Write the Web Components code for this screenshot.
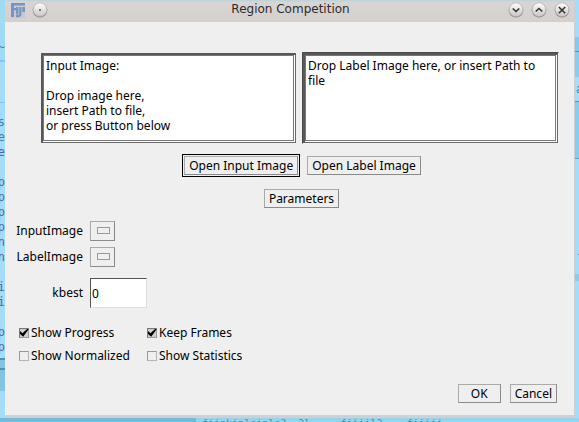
<!DOCTYPE html>
<html lang="en">
<head>
<meta charset="utf-8">
<title>Region Competition</title>
<style>
html, body { margin: 0; height: 100%; }
body { font: 12px/15px "Noto Sans", "Open Sans", sans-serif; color: #000; overflow: hidden; }
</style>
</head>
<body>
<desk-top>
  <code-strip slot="left" side="left"></code-strip>
  <dialog-window heading="Region Competition">
    <drop-row>
      <drop-area label="Input image" value="Input Image:&#10;&#10;Drop image here,&#10;insert Path to file,&#10;or press Button below"></drop-area>
      <drop-area label="Label image" deep value="Drop Label Image here, or insert Path to file"></drop-area>
    </drop-row>
    <button-row class="open">
      <push-button default>Open Input Image</push-button>
      <push-button>Open Label Image</push-button>
    </button-row>
    <button-row>
      <push-button>Parameters</push-button>
    </button-row>
    <field-list></field-list>
    <check-grid>
      <check-item checked>Show Progress</check-item>
      <check-item checked>Keep Frames</check-item>
      <check-item>Show Normalized</check-item>
      <check-item>Show Statistics</check-item>
    </check-grid>
    <button-row slot="actions" end>
      <push-button wide>OK</push-button>
      <push-button>Cancel</push-button>
    </button-row>
  </dialog-window>
  <code-strip slot="right" side="right"></code-strip>
  <code-strip slot="bottom" side="bottom"></code-strip>
</desk-top>
<script>
function define(name, render) {
  customElements.define(name, class extends HTMLElement {
    constructor() { super(); this.attachShadow({ mode: 'open' }); }
    connectedCallback() { this.shadowRoot.innerHTML = render(this); }
  });
}

define('desk-top', () => `
<style>
  :host { display: grid; grid-template: minmax(0, 1fr) 4px / 5px minmax(0, 1fr) 4px; height: 100%; background: #9ddaf9; }
  slot[name=bottom]::slotted(*) { grid-column: 1 / -1; }
</style>
<slot name="left"></slot><slot></slot><slot name="right"></slot><slot name="bottom"></slot>`);

// Slivers of the editor window that show around the dialog.
define('code-strip', el => {
  const side = el.getAttribute('side');
  const text = {
    left: '\n\n\n~\n\n\n\n\ns\ne\n<b>e\n\np\np\np\np\nn\nn\n\ni\ni\n\np\np</b>',
    right: '\n\n\n\n\n\na\n\n\n\n\n\n\n\n\n\n\n-\n\n',
    bottom: 'fiinkinleinle?  2l     fiiiil2    fiiiii'
  }[side];
  return `
<style>
  :host { display: block; overflow: hidden; }
  pre { margin: 0; font: 12px/15px "DejaVu Sans Mono", monospace; color: #3f83ad; }
  b { font-weight: normal; color: #5563a8; }
  .left { box-sizing: border-box; height: 100%; padding-top: 10px; direction: rtl;
    background: linear-gradient(#9fdcf4 0 60px, #85c6ec 60px 62px, #a3ddfb 62px 102px, #83c5ec 102px 103px, #a3ddfb 103px 358px, #4b94bb 358px 360px, #85c3e2 360px 368px, #4b94bb 368px 370px, #83c3e4 370px 391px, #a3ddfb 391px); }
  .right { box-sizing: border-box; height: 100%; padding: 7px 0 0 1px;
    background: linear-gradient(#a3ddfb 0 37px, #84c9ef 37px 51px, #4c95be 51px 52px, #8accf0 52px 77px, #a3ddfb 77px 101px, #4c95be 101px 102px, #8accf0 102px 158px, #5fa5cb 158px 159px, #a3ddfb 159px 274px, #8fcbe9 274px 281px, #a3ddfb 281px); }
  .bottom { padding-left: 202px; font-size: 10px; line-height: 12px; color: #4d8fb3;
    background: linear-gradient(90deg, #72bade 0 196px, #97d3f0 196px); }
</style>
<pre class="${side}" aria-hidden="true">${text}</pre>`;
});

define('title-button', el => `
<style>
  :host { display: block; }
  button { display: block; width: 16px; height: 16px; padding: 0; border: 0; background: none; }
  svg { display: block; }
</style>
<button type="button" aria-label="${el.getAttribute('label')}">
<svg width="16" height="16" viewBox="0 0 16 16">
  <defs><linearGradient id="g" x1="0" y1="0" x2="0" y2="1"><stop offset="0" stop-color="#fff"/><stop offset="1" stop-color="#c9c5c3"/></linearGradient></defs>
  <circle cx="8" cy="8.3" r="7.2" fill="#8a8683"/>
  <circle cx="8" cy="7.7" r="6.9" fill="url(#g)" stroke="#b0aca9" stroke-width=".7"/>
  <path d="${el.getAttribute('path')}" fill="none" stroke="#333" stroke-width="1.6"/>
</svg></button>`);

define('dialog-window', el => `
<style>
  :host { display: flex; flex-direction: column; box-sizing: border-box; background: #efefef; border-bottom: 3px solid #cfd0cf; border-right: 1px solid #d3cecd; border-top-left-radius: 4px; overflow: hidden; }
  header { display: grid; grid-template-columns: 1fr auto 1fr; height: 22px; padding: 0 4px 0 6px; background: linear-gradient(#bed4dc 0 1px, #d9d5d3 2px, #d5d0ce); }
  h1 { margin: 0; padding-top: 2px; font: 12px/15px "DejaVu Sans", sans-serif; color: #2b2b2b; }
  .side { display: flex; gap: 7px; padding-top: 2px; align-items: flex-start; }
  .right { justify-content: flex-end; }
  .logo { margin-top: 1px; }
  main { flex: 1; padding: 30px 15px 0 11px; }
  footer { padding: 0 17px 12px; }
</style>
<header>
  <div class="side">
    <svg class="logo" width="14" height="15" viewBox="0 0 14 15" fill="#7595c4">
      <rect width="14" height="15" fill="#b7c3da" opacity=".55"/>
      <path d="M0 0h14v2.500H3V5h2v2.300H3V14H0zM5 4h2.400v7.500H5zM8.200 4h2.300v7c0 2-1.200 3.200-3.500 3.200H5v-2.200h1.700c1 0 1.500-.5 1.500-1.300zM11.300 4H14v5h-2.700z"/>
    </svg>
    <title-button label="Window menu" path="M7.200 8h1.600"></title-button>
  </div>
  <h1>${el.getAttribute('heading')}</h1>
  <div class="side right">
    <title-button label="Minimize" path="M4.700 6.500 8 9.500l3.300-3"></title-button>
    <title-button label="Maximize" path="M4.700 9.500 8 6.500l3.300 3"></title-button>
    <title-button label="Close" path="M4.800 5l6.400 6.200M11.200 5l-6.400 6.200"></title-button>
  </div>
</header>
<main><slot></slot></main>
<footer><slot name="actions"></slot></footer>`);

define('drop-row', () => `
<style>:host { display: grid; grid-template-columns: 1fr 1fr; gap: 5px; margin-left: 24px; }</style><slot></slot>`);

define('drop-area', el => `
<style>
  :host { display: block; border: 1px solid transparent; }
  :host([deep]) { border-color: #4a4a4a transparent transparent #4a4a4a; }
  .rim { border: 2px solid; border-color: #585858 #6a6a6a #6a6a6a #585858; border-right-width: 1px; border-bottom-width: 1px; background: #fff; padding: 0 1px 1px 0; }
  textarea { display: block; box-sizing: border-box; width: 100%; height: 86px; margin: 0; padding: 2px; border: 1px solid #777; border-radius: 0; background: #fff; color: #000; font: inherit; resize: none; overflow: hidden; outline: none; }
</style>
<div class="rim"><textarea aria-label="${el.getAttribute('label')}">${el.getAttribute('value')}</textarea></div>`);

define('button-row', () => `
<style>
  :host { display: flex; justify-content: center; align-items: center; gap: 7px; margin: 12px 0 0 28px; }
  :host(.open) { margin-top: 10px; }
  :host([end]) { justify-content: flex-end; gap: 9px; margin: 0; }
</style><slot></slot>`);

define('push-button', () => `
<style>
  :host { display: block; }
  :host([default]) { border: 1px solid #000; padding: 1px; }
  button { display: block; box-sizing: border-box; height: 19px; padding: 0 4px 1px; border: 1px solid; border-color: #aaa #8a8a8a #8a8a8a #aaa; border-radius: 0; background: #efefef; color: #000; font: inherit; white-space: nowrap; }
  :host([wide]) button { padding: 0 12px 1px; }
</style>
<button type="button"><slot></slot></button>`);

define('field-list', () => `
<style>
  :host { display: grid; grid-template-columns: 67px 57px; gap: 6px 7px; align-items: center; margin-top: 13px; }
  label { text-align: right; padding-bottom: 1px; }
  select { appearance: none; box-sizing: border-box; width: 25px; height: 20px; margin: 0; padding: 0; border: 1px solid; border-color: #aaa #8a8a8a #8a8a8a #aaa; border-radius: 0; background: #efefef; }
  .menu { display: grid; width: 25px; }
  .menu > * { grid-area: 1 / 1; }
  .menu svg { pointer-events: none; z-index: 1; }
  input { box-sizing: border-box; width: 57px; height: 30px; margin: 0; padding: 0 1px; border: 1px solid; border-color: #555 #ddd #ddd #555; border-radius: 0; background: #fff; color: #000; font: inherit; outline: none; }
  .gap { margin-top: 5px; }
</style>
<label for="a">InputImage</label><span class="menu"><select id="a"></select><svg width="25" height="20"><rect x="7.500" y="6.500" width="12" height="6" fill="none" stroke="#999"/></svg></span>
<label for="b">LabelImage</label><span class="menu"><select id="b"></select><svg width="25" height="20"><rect x="7.500" y="6.500" width="12" height="6" fill="none" stroke="#999"/></svg></span>
<label class="gap" for="k">kbest</label><input class="gap" id="k" value="0">`);

define('check-grid', () => `
<style>:host { display: grid; grid-template-columns: 128px auto; justify-content: start; gap: 8px 0; margin: 17px 0 0 3px; }</style><slot></slot>`);

define('check-item', el => `
<style>
  :host { display: block; }
  label { display: flex; align-items: center; gap: 2px; white-space: nowrap; }
  input { appearance: none; box-sizing: border-box; width: 10px; height: 10px; margin: 0; border: 1px solid; border-color: #999 #b5b5b5 #b5b5b5 #999; background: #efefef; }
  .box { display: grid; }
  .box > * { grid-area: 1 / 1; }
  svg { pointer-events: none; z-index: 1; }
  input:checked { background: #cfcfcf; border-color: #777 #999 #999 #777; }
  input:not(:checked) + svg { visibility: hidden; }
</style>
<label><span class="box"><input type="checkbox" ${el.hasAttribute('checked') ? 'checked' : ''}><svg width="10" height="10" viewBox="0 0 10 10"><path d="M1 3 3.500 5.200 8 1h1.800L4.200 8.800 1 6z"/></svg></span><slot></slot></label>`);
</script>
</body>
</html>
